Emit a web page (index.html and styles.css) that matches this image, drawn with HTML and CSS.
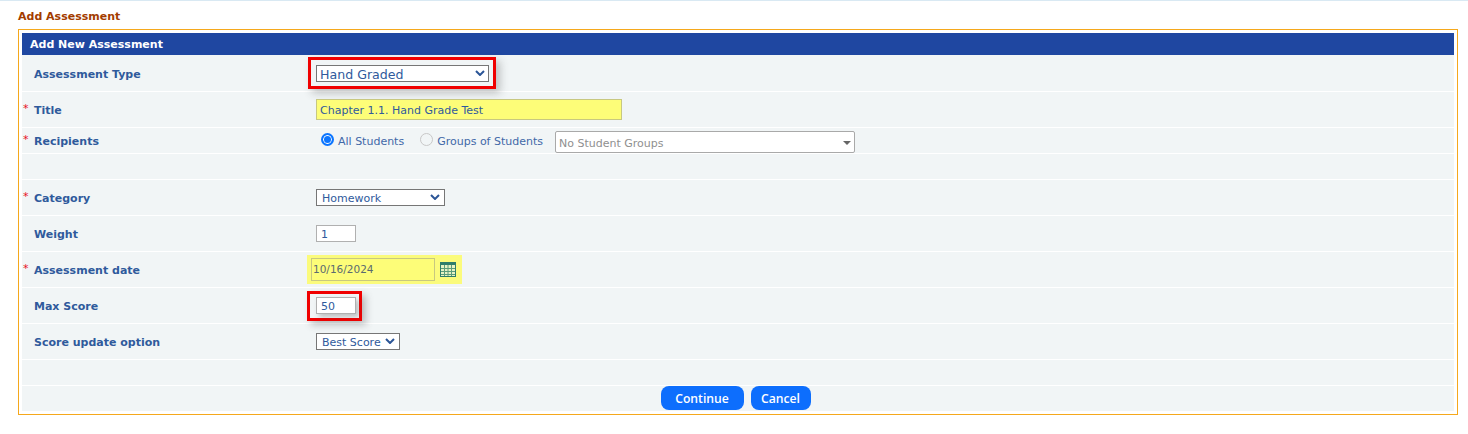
FILE: index.html
```html
<!DOCTYPE html>
<html lang="en">
<head>
<meta charset="utf-8">
<title>Add Assessment</title>
<link rel="stylesheet" href="styles.css">
</head>
<body>
<div class="topline"></div>
<h1 class="page-title">Add Assessment</h1>
<div class="box">
  <div class="box-head">Add New Assessment</div>
  <div class="row first">
    <div class="label">Assessment Type</div>
    <div class="value">
      <span class="mark mark-type"><span class="fake-select sel-type">Hand Graded<svg class="chev" viewBox="0 0 10 6"><path d="M1 1l4 4 4-4" /></svg></span></span>
    </div>
  </div>
  <div class="row tall">
    <div class="label req">Title</div>
    <div class="value"><span class="text-input title-input">Chapter 1.1. Hand Grade Test</span></div>
  </div>
  <div class="row short">
    <div class="label req">Recipients</div>
    <div class="value recipients">
      <span class="radio on"></span><span class="radio-text">All Students</span>
      <span class="radio off"></span><span class="radio-text">Groups of Students</span>
      <span class="group-select">No Student Groups<span class="tri"></span></span>
    </div>
  </div>
  <div class="row short"></div>
  <div class="row tall">
    <div class="label req">Category</div>
    <div class="value"><span class="fake-select sel-cat">Homework<svg class="chev" viewBox="0 0 10 6"><path d="M1 1l4 4 4-4" /></svg></span></div>
  </div>
  <div class="row tall">
    <div class="label">Weight</div>
    <div class="value"><span class="num-input">1</span></div>
  </div>
  <div class="row tall">
    <div class="label req">Assessment date</div>
    <div class="value">
      <span class="date-wrap"><span class="date-input">10/16/2024</span>
        <svg class="cal" viewBox="0 0 16 15"><rect x="0.5" y="0.5" width="15" height="14" fill="#e6f2c4" stroke="#2e7d6b"/><rect x="0" y="0" width="16" height="3" fill="#2e7d6b"/><path d="M1 6.5h14M1 9.5h14M1 12.5h14M4.5 3v11M8 3v11M11.5 3v11" stroke="#5b9c7a" fill="none"/></svg>
      </span>
    </div>
  </div>
  <div class="row tall">
    <div class="label">Max Score</div>
    <div class="value"><span class="mark mark-score"><span class="num-input">50</span></span></div>
  </div>
  <div class="row tall">
    <div class="label">Score update option</div>
    <div class="value"><span class="fake-select sel-score">Best Score<svg class="chev" viewBox="0 0 10 6"><path d="M1 1l4 4 4-4" /></svg></span></div>
  </div>
  <div class="row short"></div>
  <div class="row actions">
    <button class="btn btn-continue">Continue</button>
    <button class="btn btn-cancel">Cancel</button>
  </div>
</div>
</body>
</html>
```
FILE: styles.css
```css
* { box-sizing: border-box; }
html, body { margin: 0; padding: 0; background: #fff; }
body { font-family: "DejaVu Sans", Verdana, sans-serif; font-size: 11px; color: #2b5597; height: 434px; overflow: hidden; }
.topline { height: 1px; background: #d9e9f3; }
.page-title { margin: 0 0 0 18px; height: 28px; padding-top: 8px; font-size: 11px; line-height: 15px; font-weight: bold; color: #a33c00; }
.box { margin: 0 10px 0 18px; height: 386px; border: 1px solid #f5a81c; padding: 3px; }
.box-head { height: 22px; background: #1f47a1; color: #fff; font-weight: bold; font-size: 11px; line-height: 23px; padding-left: 8px; }
.row { display: flex; align-items: center; background: #f1f5f6; border-bottom: 1px solid #fff; }
.first { height: 37px; }
.tall { height: 36px; }
.short { height: 26px; }
.actions { height: 25px; border-bottom: 0; justify-content: center; align-items: flex-start; gap: 7px; padding-right: 5px; }
.label { width: 294px; padding: 2px 0 0 12px; font-weight: bold; font-size: 11px; color: #2f5a9c; position: relative; }
.req::before { content: "*"; position: absolute; left: 1px; top: 0; color: #e8101c; font-weight: normal; }
.value { display: flex; align-items: center; }
.fake-select { display: flex; align-items: center; justify-content: space-between; height: 17px; background: #fff; border: 1px solid #767676; padding: 1px 4px 0 5px; font-size: 11px; color: #2f5a9c; }
.sel-type { width: 173px; font-size: 12.6px; padding: 2px 3px 0; }
.sel-cat { width: 129px; }
.sel-score { width: 84px; }
.chev { width: 10px; height: 6px; margin-top: -3px; }
.chev path { fill: none; stroke: #2b5597; stroke-width: 2; }
.mark { display: inline-flex; align-items: center; border: 3px solid #f00000; }
.mark-type { margin-left: -8px; width: 188px; height: 32px; padding-left: 5px; box-shadow: 4px 4px 8px rgba(70, 70, 70, 0.3); }
.mark-score { margin-left: -9px; width: 55px; height: 30px; padding-left: 6px; box-shadow: 4px 4px 7px rgba(70, 70, 70, 0.3); }
.mark-score .num-input { box-shadow: 3px 3px 5px rgba(70, 70, 70, 0.3); }
.text-input { display: block; height: 21px; line-height: 21px; background: #fdfd78; border: 1px solid #c8c880; padding-left: 3px; font-size: 11px; color: #2f5a9c; }
.title-input { width: 306px; margin-top: -1px; }
.recipients { font-size: 11px; }
.radio { display: inline-block; width: 13px; height: 13px; border-radius: 50%; background: #fff; margin: -3px 4px 0 5px; }
.radio.on { border: 2px solid #0b75ff; box-shadow: inset 0 0 0 1px #fff; background: #0b75ff; }
.radio.off { margin-left: 16px; border: 1px solid #c8c8c8; background: #f1f5f6; }
.radio-text { color: #4168a8; padding-top: 2px; }
.group-select { position: relative; width: 300px; height: 22px; margin: 2px 0 0 12px; padding-left: 3px; line-height: 23px; background: #fff; border: 1px solid #a9a9a9; border-radius: 2px; color: #8f8f8f; }
.tri { position: absolute; right: 3px; top: 9px; border-style: solid; border-width: 4px 4px 0; border-color: #666 transparent transparent; }
.num-input { display: block; width: 40px; height: 17px; line-height: 17px; padding-left: 4px; background: #fff; border: 1px solid #b0b0b0; font-size: 11px; color: #2f5a9c; }
.date-wrap { display: inline-flex; align-items: center; gap: 5px; margin-left: -9px; width: 155px; height: 29px; padding-left: 4px; background: #fbfb7c; }
.date-input { display: block; width: 124px; height: 23px; line-height: 21px; padding-left: 1px; border: 1px solid #c8c880; background: #fdfd78; font-size: 10.5px; color: #5a6a70; }
.cal { width: 16px; height: 15px; }
.btn { height: 24px; border: 0; border-radius: 8px; background: #0d6efd; color: #fff; font-family: "Open Sans", "DejaVu Sans", sans-serif; font-size: 12.2px; font-weight: 600; padding: 0; }
.btn-continue { width: 83px; }
.btn-cancel { width: 60px; }
```
